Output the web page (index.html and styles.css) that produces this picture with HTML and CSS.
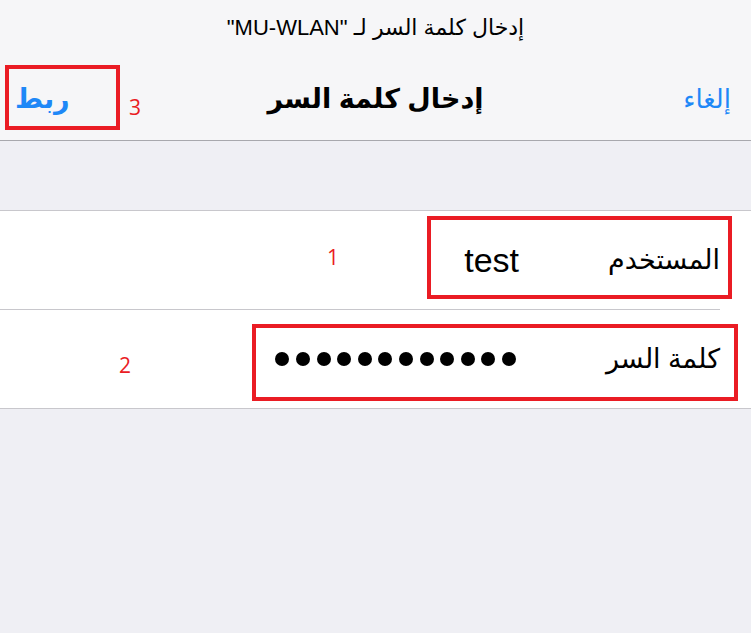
FILE: index.html
```html
<!DOCTYPE html>
<html lang="ar" dir="rtl">

<head>
    <meta charset="UTF-8">
    <meta name="viewport" content="width=device-width, initial-scale=1.0">
    <title>إدخال كلمة السر</title>
    <link rel="stylesheet" href="styles.css">
</head>

<body>

    <div class="header">
        <div class="prompt">إدخال كلمة السر لـ "MU-WLAN"</div>
        <div class="navbar">
            <a href="#" class="nav-btn">إلغاء</a>
            <div class="nav-title">إدخال كلمة السر</div>
            <a href="#" class="nav-btn nav-join">ربط</a>
        </div>
    </div>

    <div class="list">
        <div class="row">
            <div class="row-label">المستخدم</div>
            <div class="row-value" dir="ltr">test</div>
        </div>
        <div class="row">
            <div class="row-label">كلمة السر</div>
            <div class="row-value dots">
                <span></span><span></span><span></span><span></span>
                <span></span><span></span><span></span><span></span>
                <span></span><span></span><span></span><span></span>
            </div>
        </div>
    </div>

    <!-- ملاحظات الشرح -->
    <div class="note-box box-user"></div>
    <div class="note-box box-pass"></div>
    <div class="note-box box-join"></div>
    <div class="note-num num-1">1</div>
    <div class="note-num num-2">2</div>
    <div class="note-num num-3">3</div>

</body>

</html>
```

FILE: styles.css
```css
body {
    font-family: 'Liberation Sans', 'DejaVu Sans', sans-serif;
    margin: 0;
    height: 633px;
    background-color: #efeff4;
    color: #000;
    position: relative;
    overflow: hidden;
}

.header {
    height: 140px;
    background-color: #f6f6f8;
    border-bottom: 1px solid #a8a8ad;
    display: flex;
    flex-direction: column;
}

.prompt {
    text-align: center;
    font-size: 22px;
    line-height: 26px;
    padding-top: 15px;
}

.navbar {
    display: flex;
    align-items: center;
    justify-content: space-between;
    padding: 0 20px 0 15px;
    margin-top: 32px;
    height: 52px;
}

.nav-btn {
    color: #1e88f7;
    font-size: 26px;
    text-decoration: none;
}

.nav-join {
    font-weight: bold;
    font-size: 27px;
}

.nav-title {
    font-weight: bold;
    font-size: 27px;
    position: absolute;
    left: 0;
    right: 0;
    text-align: center;
    pointer-events: none;
}

.list {
    margin-top: 69px;
    background: #ffffff;
    border-top: 1px solid #c8c7cc;
    border-bottom: 1px solid #c8c7cc;
    padding-right: 31px;
}

.row {
    height: 98px;
    display: flex;
    align-items: center;
}

.row + .row {
    border-top: 1px solid #c8c7cc;
}

.row-label {
    width: 201px;
    font-size: 27px;
}

.row-value {
    font-size: 34px;
}

.dots {
    display: flex;
    gap: 6.6px;
    direction: ltr;
    margin-right: 3px;
}

.dots span {
    width: 14px;
    height: 14px;
    border-radius: 50%;
    background: #000;
}

.note-box {
    position: absolute;
    border: 4px solid #ea1c24;
    box-sizing: border-box;
}

.box-user {
    left: 427px;
    top: 216px;
    width: 305px;
    height: 83px;
}

.box-pass {
    left: 252px;
    top: 324px;
    width: 486px;
    height: 77px;
}

.box-join {
    left: 5px;
    top: 65px;
    width: 115px;
    height: 65px;
}

.note-num {
    position: absolute;
    color: #ea1c24;
    font-family: 'Open Sans', sans-serif;
    font-size: 21px;
    line-height: 24px;
}

.num-1 {
    left: 327px;
    top: 245px;
}

.num-2 {
    left: 119px;
    top: 353px;
}

.num-3 {
    left: 129px;
    top: 95px;
}
```
